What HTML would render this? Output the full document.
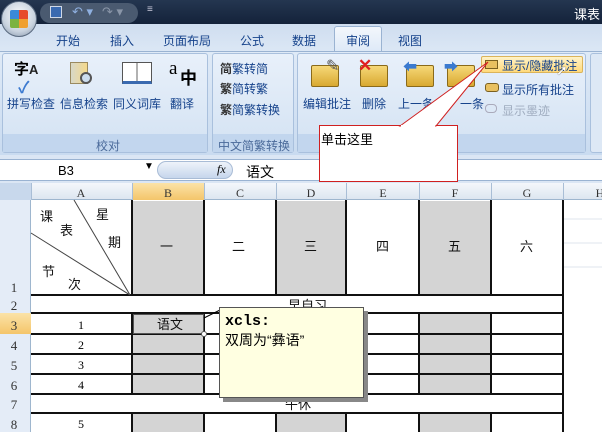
<!DOCTYPE html>
<html><head><meta charset="utf-8"><style>
*{margin:0;padding:0;box-sizing:border-box}
body{width:602px;height:432px;overflow:hidden;position:relative;background:#fff;font-family:"Liberation Sans","Noto Sans CJK SC",sans-serif;font-size:12px}
.a{position:absolute}
.t{font-size:12px;color:#15428b;white-space:nowrap}
.cell{position:absolute;text-align:center;color:#000;font-size:12px}
.g{background:#d4d4d4}
.ic{position:absolute;width:28px;height:22px;background:linear-gradient(#f6d878,#d9a931);border:1px solid #8a6a1a;border-radius:2px}
</style></head><body>
<!-- title bar -->
<div class="a" style="left:0;top:0;width:602px;height:24px;background:linear-gradient(#243650,#14223a)"></div>
<div class="a" style="left:40px;top:3px;width:98px;height:20px;border-radius:10px;background:#4a5a70"></div>
<div class="a" style="left:50px;top:6px;width:12px;height:12px;background:#3a6ab0;border:1px solid #cfd8e6"></div>
<div class="a" style="left:72px;top:4px;color:#8fb0e0;font-size:13px">↶ ▾</div>
<div class="a" style="left:102px;top:4px;color:#8a96a8;font-size:13px">↷ ▾</div>
<div class="a" style="left:147px;top:4px;color:#ccd;font-size:10px">≡</div>
<div class="a" style="left:574px;top:4px;color:#fff;font-size:13px">课表</div>
<!-- tabs row -->
<div class="a" style="left:0;top:24px;width:602px;height:27px;background:linear-gradient(#cfddef,#dbe7f5)"></div>
<div class="a" style="left:1px;top:1px;width:36px;height:36px;border-radius:50%;background:radial-gradient(circle at 50% 40%,#fff,#c8d2de 60%,#7d8ea4);border:1px solid #5b6b80"></div>
<div class="a" style="left:10px;top:10px;width:18px;height:18px;background:conic-gradient(#e74c2c 0 25%,#f0a030 0 50%,#7bb340 0 75%,#3a8ad8 0);border-radius:2px"></div>
<div class="a" style="left:334px;top:26px;width:48px;height:26px;background:linear-gradient(#f3f7fc,#dde9f7);border:1px solid #9ab3d2;border-bottom:none;border-radius:3px 3px 0 0"></div>
<div class="a t" style="left:56px;top:32px">开始</div>
<div class="a t" style="left:110px;top:32px">插入</div>
<div class="a t" style="left:163px;top:32px">页面布局</div>
<div class="a t" style="left:240px;top:32px">公式</div>
<div class="a t" style="left:292px;top:32px">数据</div>
<div class="a t" style="left:346px;top:32px">审阅</div>
<div class="a t" style="left:398px;top:32px">视图</div>
<!-- ribbon -->
<div class="a" style="left:0;top:51px;width:602px;height:104px;background:linear-gradient(#dfeaf7,#c9dbf0);border-top:1px solid #9ab3d2"></div>
<div class="a" style="left:2px;top:53px;width:206px;height:100px;border:1px solid #a9c0dd;border-radius:3px;background:linear-gradient(#e8f0fa,#d3e2f3)"></div>
<div class="a" style="left:3px;top:134px;width:204px;height:18px;background:#c2d6ee"></div>
<div class="a" style="left:212px;top:53px;width:82px;height:100px;border:1px solid #a9c0dd;border-radius:3px;background:linear-gradient(#e8f0fa,#d3e2f3)"></div>
<div class="a" style="left:213px;top:134px;width:80px;height:18px;background:#c2d6ee"></div>
<div class="a" style="left:297px;top:53px;width:289px;height:100px;border:1px solid #a9c0dd;border-radius:3px;background:linear-gradient(#e8f0fa,#d3e2f3)"></div>
<div class="a" style="left:298px;top:134px;width:287px;height:18px;background:#c2d6ee"></div>
<div class="a" style="left:590px;top:53px;width:14px;height:100px;border:1px solid #a9c0dd;border-radius:3px;background:#dde8f5"></div>
<div class="a" style="left:14px;top:58px;font-weight:bold;font-size:15px">字<span style="font-size:13px;color:#222">A</span></div>
<div class="a" style="left:18px;top:74px;color:#3c7ad0;font-size:16px;font-weight:bold">✓</div>
<div class="a" style="left:70px;top:62px;width:18px;height:22px;background:linear-gradient(90deg,#d8d8c8,#f4d98c);border:1px solid #9a8a60"></div>
<div class="a" style="left:80px;top:72px;width:12px;height:12px;border:2px solid #555;border-radius:50%;background:#cde"></div>
<div class="a" style="left:122px;top:62px;width:30px;height:22px;border:1px solid #555;background:linear-gradient(90deg,#fff 48%,#666 48%,#666 52%,#fff 52%);border-bottom:3px solid #3a6ab0"></div>
<div class="a" style="left:169px;top:58px;font-size:19px;font-family:'Liberation Serif',serif">a</div>
<div class="a" style="left:180px;top:64px;font-size:17px;font-weight:bold">中</div>
<div class="a t" style="left:7px;top:95px">拼写检查</div>
<div class="a t" style="left:60px;top:95px">信息检索</div>
<div class="a t" style="left:113px;top:95px">同义词库</div>
<div class="a t" style="left:170px;top:95px">翻译</div>
<div class="a t" style="left:96px;top:137px;color:#4a6a9a">校对</div>
<div class="a t" style="left:220px;top:60px"><b style="color:#333">简</b>繁转简</div>
<div class="a t" style="left:220px;top:80px"><b style="color:#333">繁</b>简转繁</div>
<div class="a t" style="left:220px;top:101px"><b style="color:#333">繁</b>简繁转换</div>
<div class="a t" style="left:218px;top:137px;color:#4a6a9a">中文简繁转换</div>
<div class="ic" style="left:311px;top:65px"></div>
<div class="a" style="left:326px;top:56px;color:#555;font-size:16px">✎</div>
<div class="ic" style="left:360px;top:65px"></div>
<div class="a" style="left:358px;top:56px;color:#e02020;font-size:17px;font-weight:bold">✕</div>
<div class="ic" style="left:406px;top:65px"></div>
<div class="a" style="left:403px;top:57px;color:#3a7ad0;font-size:14px">⬅</div>
<div class="ic" style="left:447px;top:65px"></div>
<div class="a" style="left:444px;top:57px;color:#3a7ad0;font-size:14px">➡</div>
<div class="a t" style="left:303px;top:95px">编辑批注</div>
<div class="a t" style="left:362px;top:95px">删除</div>
<div class="a t" style="left:398px;top:95px">上一条</div>
<div class="a t" style="left:460px;top:95px">一条</div>
<div class="a" style="left:481px;top:56px;width:102px;height:17px;background:linear-gradient(#fff3c8,#ffd97a);border:1px solid #dbb45a;border-radius:2px"></div>
<div class="a" style="left:485px;top:60px;width:13px;height:9px;background:#e8c060;border:1px solid #7a6020"></div>
<div class="a t" style="left:502px;top:57px">显示/隐藏批注</div>
<div class="a" style="left:556px;top:62px;font-size:14px;color:#fff;text-shadow:0 0 1px #000">➚</div>
<div class="a" style="left:485px;top:83px;width:14px;height:9px;background:#e8c060;border:1px solid #7a6020;border-radius:3px"></div>
<div class="a t" style="left:502px;top:81px">显示所有批注</div>
<div class="a" style="left:485px;top:104px;width:12px;height:9px;border:1px solid #aab;border-radius:4px"></div>
<div class="a t" style="left:502px;top:102px;color:#a0adc0">显示墨迹</div>
<!-- formula bar -->
<div class="a" style="left:0;top:155px;width:602px;height:28px;background:#dbe6f4"></div>
<div class="a" style="left:0;top:159px;width:602px;height:22px;background:#fff;border-top:1px solid #9ab3d2;border-bottom:1px solid #9ab3d2"></div>
<div class="a" style="left:58px;top:163px;font-size:13px">B3</div>
<div class="a" style="left:144px;top:161px;font-size:10px">▼</div>
<div class="a" style="left:157px;top:161px;width:76px;height:18px;border-radius:9px;background:linear-gradient(#eef3fa,#c6d6ec);border:1px solid #a9bcd6"></div>
<div class="a" style="left:217px;top:162px;font-family:'Liberation Serif',serif;font-style:italic;font-size:12px">fx</div>
<div class="a" style="left:246px;top:162px;font-size:14px">语文</div>
<!-- column headers -->
<div class="a" style="left:0;top:183px;width:602px;height:17px;background:linear-gradient(#f4f7fb,#dde6f0);border-bottom:1px solid #9eb6ce"></div>
<div class="a" style="left:0;top:183px;width:31px;height:17px;background:#c8d8ec"></div>
<div class="a" style="left:132px;top:183px;width:72px;height:17px;background:linear-gradient(#fbe3a8,#f4c56a)"></div>
<div class="a" style="left:0;top:200px;width:31px;height:232px;background:#e4ecf7;border-right:1px solid #9eb6ce"></div>
<div class="a" style="left:0;top:313px;width:31px;height:21px;background:linear-gradient(#fbe3a8,#f4c56a)"></div>
<svg class="a" style="left:0;top:183px" width="602" height="249">
<g stroke="#a9bed6" stroke-width="1">
<line x1="31.5" y1="0" x2="31.5" y2="17"/><line x1="132.5" y1="0" x2="132.5" y2="17"/><line x1="204.5" y1="0" x2="204.5" y2="17"/><line x1="276.5" y1="0" x2="276.5" y2="17"/><line x1="346.5" y1="0" x2="346.5" y2="17"/><line x1="419.5" y1="0" x2="419.5" y2="17"/><line x1="491.5" y1="0" x2="491.5" y2="17"/><line x1="563.5" y1="0" x2="563.5" y2="17"/>
</g>
<g font-family="Liberation Serif,serif" font-size="12" text-anchor="middle" fill="#333">
<text x="81" y="14">A</text><text x="168" y="14">B</text><text x="240" y="14">C</text><text x="311" y="14">D</text><text x="383" y="14">E</text><text x="455" y="14">F</text><text x="527" y="14">G</text><text x="600" y="14">H</text>
</g>
<!-- shaded cells -->
<g fill="#d4d4d4">
<rect x="133" y="18" width="71" height="94"/><rect x="277" y="18" width="69" height="94"/><rect x="420" y="18" width="71" height="94"/>
<rect x="133" y="131" width="71" height="80"/><rect x="277" y="131" width="69" height="80"/><rect x="420" y="131" width="71" height="80"/>
<rect x="133" y="231" width="71" height="18"/><rect x="277" y="231" width="69" height="18"/><rect x="420" y="231" width="71" height="18"/>
</g>
<g stroke="#dfe6ee"><line x1="564" y1="36" x2="602" y2="36"/><line x1="564" y1="60" x2="602" y2="60"/><line x1="564" y1="84" x2="602" y2="84"/></g>
<g stroke="#111" stroke-width="2">
<line x1="31" y1="112" x2="564" y2="112"/><line x1="31" y1="130" x2="564" y2="130"/><line x1="31" y1="151" x2="564" y2="151"/><line x1="31" y1="171" x2="564" y2="171"/><line x1="31" y1="191" x2="564" y2="191"/><line x1="31" y1="211" x2="564" y2="211"/><line x1="31" y1="230" x2="564" y2="230"/>
<line x1="132" y1="17" x2="132" y2="112"/><line x1="204" y1="17" x2="204" y2="112"/><line x1="276" y1="17" x2="276" y2="112"/><line x1="346" y1="17" x2="346" y2="112"/><line x1="419" y1="17" x2="419" y2="112"/><line x1="491" y1="17" x2="491" y2="112"/><line x1="563" y1="17" x2="563" y2="249"/>
<line x1="132" y1="130" x2="132" y2="211"/><line x1="204" y1="130" x2="204" y2="211"/><line x1="276" y1="130" x2="276" y2="211"/><line x1="346" y1="130" x2="346" y2="211"/><line x1="419" y1="130" x2="419" y2="211"/><line x1="491" y1="130" x2="491" y2="211"/>
<line x1="132" y1="230" x2="132" y2="249"/><line x1="204" y1="230" x2="204" y2="249"/><line x1="276" y1="230" x2="276" y2="249"/><line x1="346" y1="230" x2="346" y2="249"/><line x1="419" y1="230" x2="419" y2="249"/><line x1="491" y1="230" x2="491" y2="249"/>
</g>
<g stroke="#444" stroke-width="1"><line x1="31" y1="50" x2="130" y2="112"/><line x1="74" y1="17" x2="130" y2="112"/></g>
<rect x="133.5" y="131.5" width="70" height="19" fill="#d4d4d4" stroke="#555"/>
<g fill="#9ab0c8" font-size="13" font-family="Liberation Serif,serif" text-anchor="middle">
<text x="14" y="109" fill="#333">1</text><text x="14" y="127" fill="#333">2</text><text x="14" y="147" fill="#333">3</text><text x="14" y="167" fill="#333">4</text><text x="14" y="187" fill="#333">5</text><text x="14" y="207" fill="#333">6</text><text x="14" y="226" fill="#333">7</text><text x="14" y="246" fill="#333">8</text>
</g>
<g font-size="13" font-family="Liberation Sans,Noto Sans CJK SC,sans-serif" fill="#111">
<text x="40" y="38">课</text><text x="60" y="52">表</text><text x="96" y="36">星</text><text x="108" y="64">期</text><text x="42" y="93">节</text><text x="68" y="106">次</text>
<text x="160" y="68">一</text><text x="232" y="68">二</text><text x="304" y="68">三</text><text x="376" y="68">四</text><text x="448" y="68">五</text><text x="520" y="68">六</text>
<text x="288" y="127">早自习</text><text x="157" y="146">语文</text><text x="285" y="226">午休</text>
</g>
<g font-size="12" font-family="Liberation Serif,serif" text-anchor="middle"><text x="81" y="146">1</text><text x="81" y="166">2</text><text x="81" y="186">3</text><text x="81" y="206">4</text><text x="81" y="245">5</text></g>
<line x1="204" y1="135" x2="220" y2="127" stroke="#000"/>
<circle cx="204" cy="151" r="2.5" fill="#fff" stroke="#555"/>
</svg>
<!-- comment -->
<div class="a" style="left:223px;top:311px;width:145px;height:91px;background:#888"></div>
<div class="a" style="left:219px;top:307px;width:145px;height:91px;background:#ffffe1;border:1px solid #555;padding:4px 5px;font-size:14px;line-height:19px">
<div style="font-family:'Liberation Mono',monospace;font-weight:bold;font-size:15px">xcls:</div>
<div>双周为“彝语”</div></div>
<!-- callout -->
<svg class="a" style="left:0;top:0" width="602" height="432">
<rect x="319.5" y="125.5" width="138" height="56" fill="#fff" stroke="#d02020"/>
<polygon points="400,126 488,62 436,126" fill="#fff" stroke="#d02020"/>
<line x1="401" y1="126" x2="435" y2="126" stroke="#fff" stroke-width="2"/>
</svg>
<div class="a" style="left:321px;top:129px;font-size:13px">单击这里</div>
</body></html>
